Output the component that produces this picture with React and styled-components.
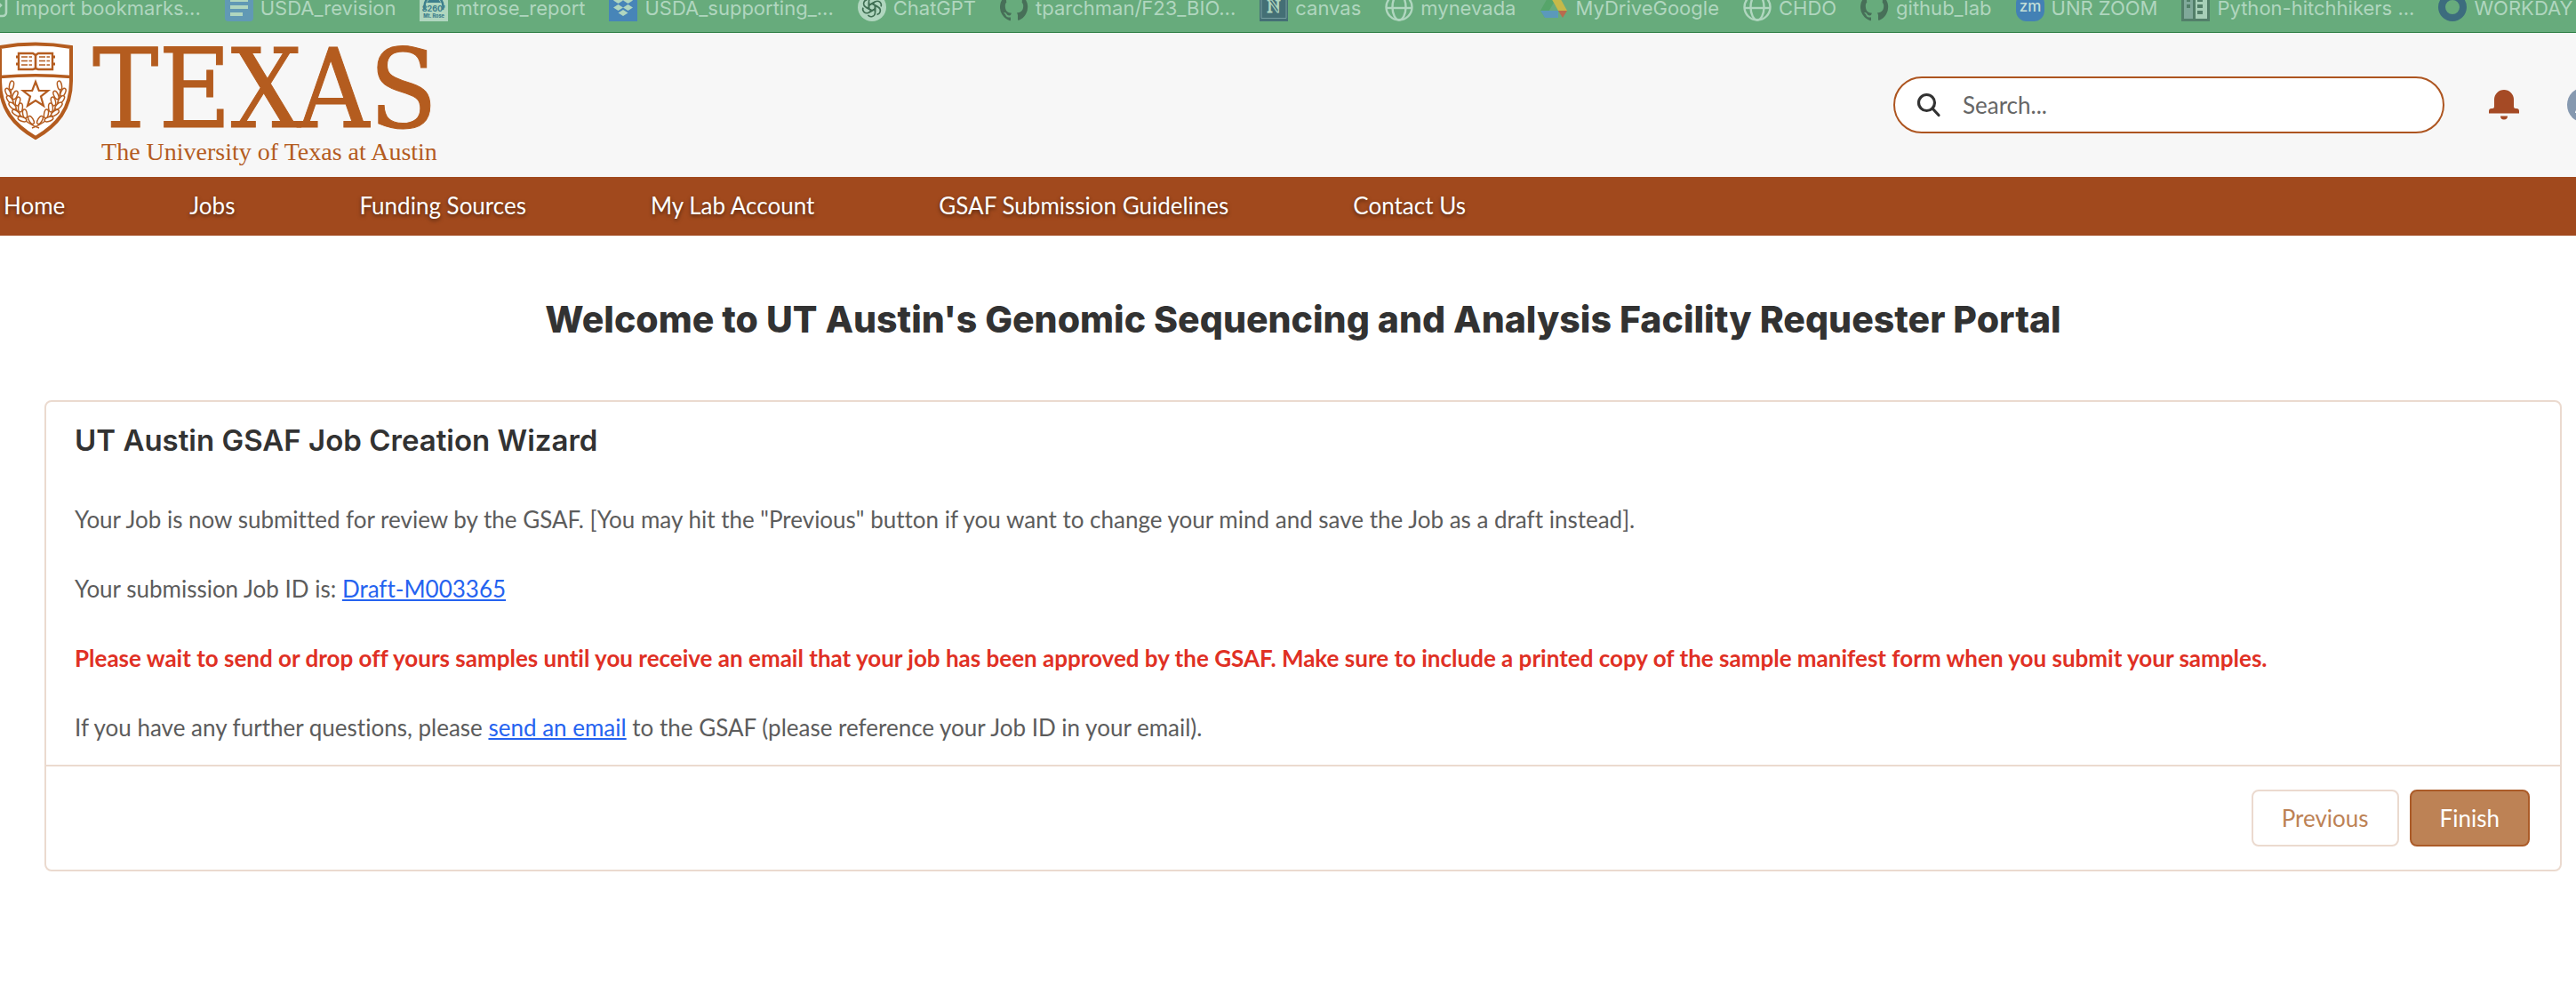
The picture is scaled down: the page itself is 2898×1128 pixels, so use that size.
import React from "react";
import styled, { createGlobalStyle } from "styled-components";

const GlobalStyle = createGlobalStyle`
  *, *::before, *::after { box-sizing: border-box; }
  body {
    margin: 0;
    background: #fff;
    color: #5c5c5c;
    font-family: Lato, sans-serif;
    font-size: 26px;
    line-height: 39px;
    font-variant-ligatures: none;
    overflow-x: hidden;
  }
`;

const BookmarkBar = styled.nav`
  display: flex;
  align-items: flex-start;
  gap: 27px;
  height: 37px;
  overflow: hidden;
  background: #67ab7c;
  border-bottom: 1px solid #2f7f45;
`;
const Bookmark = styled.a`
  display: flex;
  flex: none;
  gap: 8px;
  margin-top: -8px;
  font: 22px/34px Inter, sans-serif;
  color: #b0d6bf;
  white-space: nowrap;
  text-decoration: none;
  &:first-child { margin-left: -23px; }
  svg { display: block; width: 32px; height: 32px; flex: none; }
`;

const Header = styled.header`
  display: flex;
  align-items: flex-start;
  justify-content: space-between;
  height: 162px;
  overflow: hidden;
  background: #f7f7f7;
`;
const Brand = styled.a`
  display: flex;
  gap: 20px;
  padding-top: 10px;
  color: #b45c1f;
  text-decoration: none;
`;
const Crest = styled.svg`
  width: 84px;
  height: 112px;
`;
const Wordmark = styled.div`
  display: flex;
  flex-direction: column;
  align-items: flex-end;
`;
const WordTop = styled.span`
  font: 124px/106px "DejaVu Serif Condensed", "DejaVu Serif", serif;
  -webkit-text-stroke: 1px currentColor;
`;
const WordSub = styled.span`
  font: 28px/36px "Liberation Serif", serif;
`;
const Tools = styled.div`
  display: flex;
  flex: none;
  align-items: center;
  gap: 50px;
  padding-top: 49px;
  margin-right: -30px;
`;
const Search = styled.label`
  display: flex;
  align-items: center;
  gap: 24px;
  width: 620px;
  height: 64px;
  padding: 0 24px;
  background: #fff;
  border: 2px solid #ad5520;
  border-radius: 32px;
  input {
    flex: 1;
    min-width: 0;
    border: 0;
    outline: 0;
    padding: 0;
    background: transparent;
    font: 26px/39px Lato, sans-serif;
  }
  input::placeholder { color: #666; opacity: 1; }
`;
const IconButton = styled.button`
  display: block;
  flex: none;
  padding: 0;
  border: 0;
  background: none;
  svg { display: block; }
`;

const MainNav = styled.nav`
  display: flex;
  gap: 140px;
  align-items: center;
  height: 66px;
  padding: 0 4px 2px;
  background: #a1491d;
`;
const NavLink = styled.a`
  color: #fff;
  text-decoration: none;
  white-space: nowrap;
  text-shadow: 0 2px 4px rgba(0, 0, 0, 0.5);
`;

const Main = styled.main`
  padding: 62px 16px 0 50px;
`;
const PageTitle = styled.h1`
  margin: 0 0 59px;
  font: 800 41px/64px Inter, sans-serif;
  color: #323232;
  text-align: center;
`;
const Card = styled.section`
  border: 2px solid #ebdacf;
  border-radius: 8px;
`;
const CardBody = styled.div`
  padding: 20px 32px 22px;
`;
const CardTitle = styled.h2`
  margin: 0 0 47px;
  font: 600 33px/46px Inter, sans-serif;
  color: #323232;
`;
const Paragraph = styled.p`
  margin: 0 0 39px;
  color: ${(p) => (p.$warning ? "#e03024" : "inherit")};
  font-weight: ${(p) => (p.$warning ? 700 : 400)};
  &:last-child { margin-bottom: 0; }
`;
const TextLink = styled.a`
  color: #2563f0;
  text-decoration: underline;
`;
const CardFooter = styled.footer`
  display: flex;
  justify-content: flex-end;
  gap: 12px;
  padding: 26px 34px;
  border-top: 2px solid #ebdacf;
`;
const Button = styled.button`
  height: 64px;
  padding: 0 32px;
  border: 2px solid ${(p) => (p.$primary ? "#ab5b28" : "#ebdacf")};
  border-radius: 8px;
  background: ${(p) => (p.$primary ? "#bd8255" : "#fff")};
  color: ${(p) => (p.$primary ? "#fff" : "#bd8255")};
  font: 26px/39px Lato, sans-serif;
`;

const GitHub = () => (
  <svg viewBox="0 0 16 16"><path fill="#476f58" d="M8 0a8 8 0 0 0-2.5 15.6c.4.1.5-.2.5-.4v-1.5c-2.2.5-2.7-1-2.7-1-.4-.9-.9-1.2-.9-1.2-.7-.5.1-.5.1-.5.8.1 1.2.8 1.2.8.7 1.3 1.9.9 2.3.7.1-.5.3-.9.5-1.1-1.8-.2-3.6-.9-3.6-4 0-.9.3-1.6.8-2.1-.1-.2-.4-1 .1-2.1 0 0 .7-.2 2.2.8a7.5 7.5 0 0 1 4 0c1.5-1 2.2-.8 2.2-.8.4 1.1.2 1.9.1 2.1.5.6.8 1.3.8 2.1 0 3.1-1.9 3.7-3.7 3.9.3.3.6.8.6 1.5v2.2c0 .2.1.5.6.4A8 8 0 0 0 8 0z" /></svg>
);
const Globe = () => (
  <svg viewBox="0 0 32 32" fill="none" stroke="#b0d6bf" strokeWidth="2.4"><circle cx="16" cy="16" r="14.5" /><ellipse cx="16" cy="16" rx="7.5" ry="14.5" /><path d="M2 17h28" /></svg>
);

const bookmarks = [
  { text: "Import bookmarks...", icon: <svg viewBox="0 0 32 32" fill="none" stroke="#b0d6bf" strokeWidth="2.6"><rect x="3" y="3" width="27" height="23" rx="4" /><path d="M10 14h14M19 9l5 5-5 5" /></svg> },
  { text: "USDA_revision", icon: <svg viewBox="0 0 32 32"><rect width="32" height="32" rx="4" fill="#6199b5" /><path d="M6 8h20M6 16h20M6 24h14" stroke="#b0d6bf" strokeWidth="4" /></svg> },
  { text: "mtrose_report", icon: <svg viewBox="0 0 32 32"><rect width="32" height="32" fill="#b0d6bf" /><path d="M6 19a10.5 12 0 1 1 20 0" fill="none" stroke="#3d7f8c" strokeWidth="2.5" /><path d="M8 11l3-4h10l3 4z" fill="#3d7f8c" /><text x="16" y="21" textAnchor="middle" fontFamily="Inter" fontWeight="700" fontSize="9" fill="#3d7f8c">8260'</text><text x="16" y="28" textAnchor="middle" fontFamily="Inter" fontWeight="800" fontSize="5.5" fill="#3d7f8c">Mt. Rose</text></svg> },
  { text: "USDA_supporting_...", icon: <svg viewBox="0 0 32 32"><rect width="32" height="32" fill="#4785b8" /><path fill="#b0d6bf" d="M10.5 5l5.5 3.5-5.5 3.5L5 8.5zM21.5 5L27 8.5 21.5 12 16 8.5zM10.5 13l5.5 3.5-5.5 3.5L5 16.5zM21.5 13l5.5 3.5-5.5 3.5-5.5-3.5zM16 19l5.5 3.5L16 26l-5.5-3.5z" /></svg> },
  { text: "ChatGPT", icon: <svg viewBox="0 0 32 32"><circle cx="16" cy="16" r="16" fill="#b0d6bf" /><g fill="none" stroke="#3f6e53" strokeWidth="1.6">{[0, 60, 120, 180, 240, 300].map((a) => <path key={a} transform={`rotate(${a} 16 16)`} d="M12.5 18V9.5a4.5 4.5 0 0 1 8-2.5M12.5 14l6.5-3.800" />)}</g></svg> },
  { text: "tparchman/F23_BIO...", icon: <GitHub /> },
  { text: "canvas", icon: <svg viewBox="0 0 32 32"><rect width="32" height="32" fill="#446f75" /><path d="M2 2v26.500h28V2" fill="none" stroke="#769da0" /><text x="16" y="22" textAnchor="middle" fontFamily="Liberation Serif" fontWeight="700" fontSize="20" fill="#446f75" stroke="#b0d6bf" strokeWidth="1.2">N</text></svg> },
  { text: "mynevada", icon: <Globe /> },
  { text: "MyDriveGoogle", icon: <svg viewBox="0 0 32 32"><path d="M11 2L1 20l5 8 10-17z" fill="#56a56a" /><path d="M11 2h10l10 18H21z" fill="#c6b949" /><path d="M1 20h20v8H6z" fill="#5b99bb" /><path d="M21 20h10l-5 8z" fill="#b96a4e" /></svg> },
  { text: "CHDO", icon: <Globe /> },
  { text: "github_lab", icon: <GitHub /> },
  { text: "UNR ZOOM", icon: <svg viewBox="0 0 32 32"><rect width="32" height="32" rx="12" fill="#4381b5" /><text x="16" y="21" textAnchor="middle" fontFamily="Inter" fontWeight="500" fontSize="17" fill="#c3dfd8">zm</text></svg> },
  { text: "Python-hitchhikers ...", icon: <svg viewBox="0 0 32 32"><rect width="32" height="32" fill="#527f69" /><path d="M3 0h10v29H3z" fill="#80a99a" /><path d="M16 0h13v29H16z" fill="#a7cfb8" /><path d="M6 13h4v4H6zM6 5h4v5H6zM18 6h6v4h-6zM18 13h6v4h-6zM18 20h6v4h-6z" fill="#527f69" /></svg> },
  { text: "WORKDAY", icon: <svg viewBox="0 0 32 32"><circle cx="16" cy="16" r="12" fill="none" stroke="#3c6c7e" strokeWidth="8" /></svg> },
];

const navItems = ["Home", "Jobs", "Funding Sources", "My Lab Account", "GSAF Submission Guidelines", "Contact Us"];

// Leaves of one laurel branch: centre x, centre y, rotation.
const leaves = [
  [13, 49, 12], [9, 57, -25], [17, 60, 25], [11, 65, -35], [20, 67, 15],
  [14, 72, -45], [23, 74, 5], [18, 80, -55], [28, 81, -10], [25, 87, -70], [35, 88, -30],
];
const Branch = () => (
  <g fill="#fff" strokeWidth="1.5">
    <path d="M12 54C14 74 24 90 44 97" fill="none" />
    {leaves.map(([x, y, a]) => <ellipse key={`${x}-${y}`} cx={x} cy={y} rx="2.4" ry="5" transform={`rotate(${a} ${x} ${y})`} />)}
  </g>
);

const TexasCrest = () => (
  <Crest viewBox="0 0 84 112" fill="none" stroke="currentColor" aria-hidden="true">
    <path d="M0 6Q40-1 80 6V44C80 76 64 94 40 108C16 94 0 76 0 44Z" fill="#fff" strokeWidth="4" />
    <path d="M0 39.5Q40 36 80 39.5" strokeWidth="3.6" />
    <path d="M21 13H37L40 15L43 13H59V31H43L40 30L37 31H21Z" strokeWidth="2.4" />
    <path d="M40 14V31" strokeWidth="2.6" />
    <path d="M24 17H36M24 21.5H36M24 26H36M44 17H56M44 21.5H56M44 26H56" strokeWidth="1.7" strokeDasharray="7 1.5" />
    <path d="M18 17h3M18 25h3M59 17h3M59 25h3" strokeWidth="3" />
    <path d="M40 45L43.8 55H54L46 61.5L49 72L40 66L31 72L34 61.5L26 55H36.2Z" strokeWidth="2.2" />
    <Branch />
    <g transform="translate(80 0) scale(-1 1)"><Branch /></g>
  </Crest>
);

export default function App() {
  return (
    <>
      <GlobalStyle />
      <BookmarkBar aria-label="Bookmarks">
        {bookmarks.map((b) => (
          <Bookmark href="#" key={b.text}>{b.icon}<span>{b.text}</span></Bookmark>
        ))}
      </BookmarkBar>
      <Header>
        <Brand href="#">
          <TexasCrest />
          <Wordmark><WordTop>TEXAS</WordTop><WordSub>The University of Texas at Austin</WordSub></Wordmark>
        </Brand>
        <Tools>
          <Search>
            <svg width="28" height="28" viewBox="0 0 28 28" fill="none" stroke="#323232" strokeWidth="3.2" strokeLinecap="round"><circle cx="11.5" cy="11.5" r="9" /><path d="M18 18l7 7.5" /></svg>
            <input type="search" aria-label="Search" placeholder="Search..." />
          </Search>
          <IconButton type="button" aria-label="Notifications">
            <svg width="38" height="36" viewBox="0 0 38 36" fill="#a54a25"><path d="M5 12a11 11 0 0 1 22 0v8q0 2 2 2h1a3 3 0 0 1 3 3v2.5H-1V25a3 3 0 0 1 3-3h1q2 0 2-2zM12 30.5h8a4 4 0 0 1-8 0z" transform="translate(1 0)" /></svg>
          </IconButton>
          <IconButton type="button" aria-label="Profile">
            <svg width="40" height="40" viewBox="0 0 40 40"><circle cx="20" cy="20" r="20" fill="#8699b0" /><circle cx="20" cy="16" r="6" fill="#fff" /><path d="M9 29q0-6 11-6t11 6z" fill="#fff" /></svg>
          </IconButton>
        </Tools>
      </Header>
      <MainNav aria-label="Main">
        {navItems.map((n) => <NavLink href="#" key={n}>{n}</NavLink>)}
      </MainNav>
      <Main>
        <PageTitle>Welcome to UT Austin's Genomic Sequencing and Analysis Facility Requester Portal</PageTitle>
        <Card>
          <CardBody>
            <CardTitle>UT Austin GSAF Job Creation Wizard</CardTitle>
            <Paragraph>Your Job is now submitted for review by the GSAF. [You may hit the "Previous" button if you want to change your mind and save the Job as a draft instead].</Paragraph>
            <Paragraph>Your submission Job ID is: <TextLink href="#">Draft-M003365</TextLink></Paragraph>
            <Paragraph $warning>Please wait to send or drop off yours samples until you receive an email that your job has been approved by the GSAF. Make sure to include a printed copy of the sample manifest form when you submit your samples.</Paragraph>
            <Paragraph>If you have any further questions, please <TextLink href="#">send an email</TextLink> to the GSAF (please reference your Job ID in your email).</Paragraph>
          </CardBody>
          <CardFooter>
            <Button type="button">Previous</Button>
            <Button type="button" $primary>Finish</Button>
          </CardFooter>
        </Card>
      </Main>
    </>
  );
}
